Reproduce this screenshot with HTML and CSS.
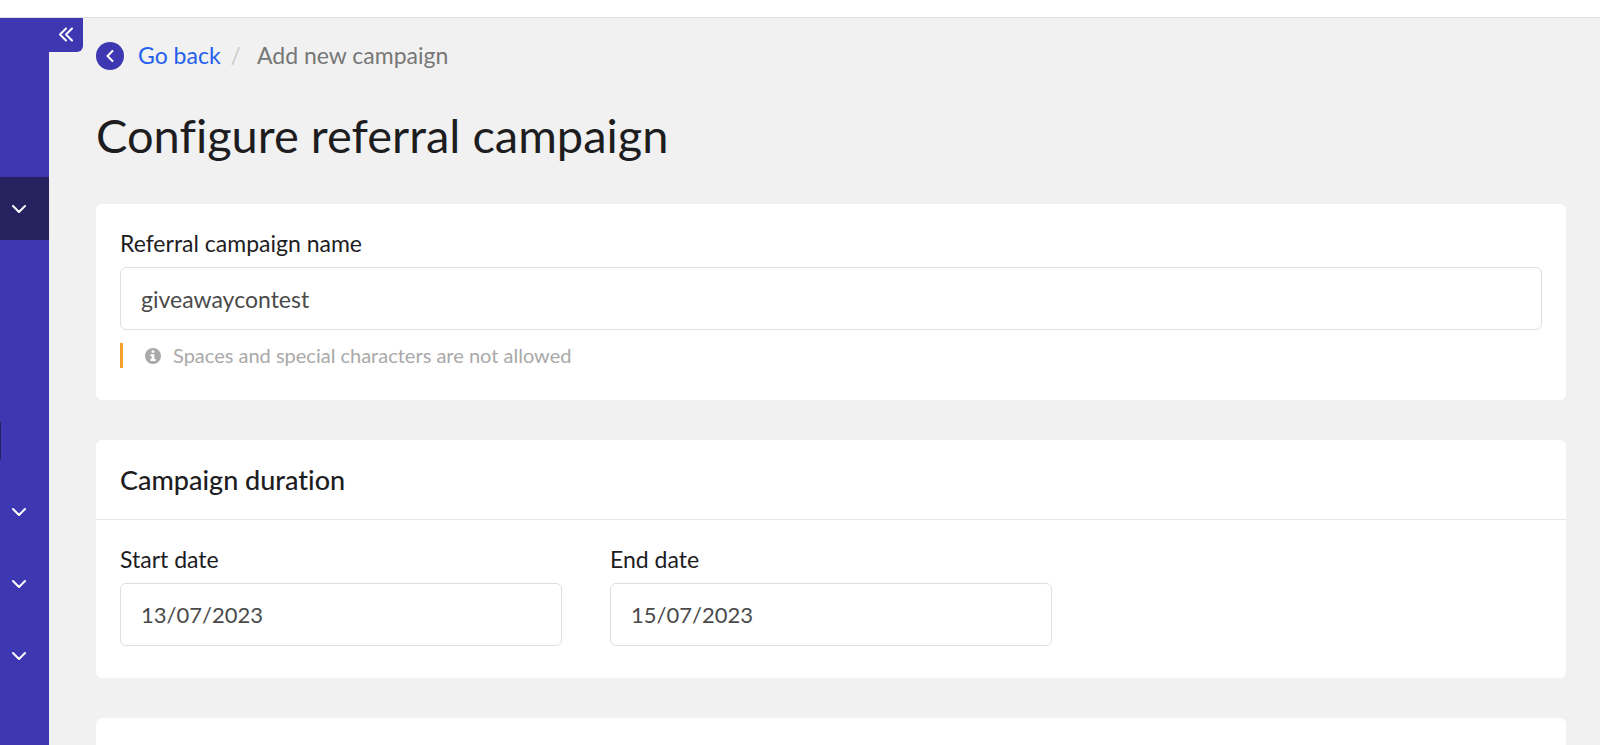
FILE: index.html
```html
<!DOCTYPE html>
<html lang="en">

<head>
    <meta charset="UTF-8">
    <meta name="viewport" content="width=device-width, initial-scale=1.0">
    <title>Configure referral campaign</title>
    <link rel="stylesheet" href="styles.css">
</head>

<body>

    <header class="topbar"></header>

    <div class="layout">
        <nav class="sidebar" aria-label="Main menu">
            <button class="collapse-btn" type="button" aria-label="Collapse menu">
                <svg width="16" height="16" viewBox="0 0 16 16"><path d="M8 1.5 2 7.5l6 6M14 1.5 8 7.5l6 6"/></svg>
            </button>
            <button class="nav-item active" type="button" aria-label="Open section">
                <svg width="14" height="8" viewBox="0 0 14 8"><path d="M1 1l6 6 6-6"/></svg>
            </button>
            <div class="nav-current"></div>
            <button class="nav-item" type="button" aria-label="Open section">
                <svg width="14" height="8" viewBox="0 0 14 8"><path d="M1 1l6 6 6-6"/></svg>
            </button>
            <button class="nav-item" type="button" aria-label="Open section">
                <svg width="14" height="8" viewBox="0 0 14 8"><path d="M1 1l6 6 6-6"/></svg>
            </button>
            <button class="nav-item" type="button" aria-label="Open section">
                <svg width="14" height="8" viewBox="0 0 14 8"><path d="M1 1l6 6 6-6"/></svg>
            </button>
        </nav>

        <main class="content">
            <div class="breadcrumb">
                <a class="back-link" href="#">
                    <span class="back-icon">
                        <svg width="8" height="12" viewBox="0 0 8 12"><path d="M6.5 1 1.5 6l5 5"/></svg>
                    </span>
                    Go back
                </a>
                <span class="separator">/</span>
                <span class="current">Add new campaign</span>
            </div>

            <h1 class="page-title">Configure referral campaign</h1>

            <section class="card">
                <div class="card-body">
                    <label for="campaignName">Referral campaign name</label>
                    <input type="text" id="campaignName" value="giveawaycontest">
                    <p class="hint">
                        <svg width="16" height="16" viewBox="0 0 16 16">
                            <circle cx="8" cy="8" r="8" fill="#a9a9a9"/>
                            <path d="M6.7 2.4h2.6v2.4H6.7zM5.4 6.2h3.9v4.6h1.3v2.1H5.4v-2.1h1.3V8.3H5.4z" fill="#fff"/>
                        </svg>
                        Spaces and special characters are not allowed
                    </p>
                </div>
            </section>

            <section class="card">
                <h2 class="card-header">Campaign duration</h2>
                <div class="card-body date-grid">
                    <div class="field">
                        <label for="startDate">Start date</label>
                        <input class="date-input" type="text" id="startDate" value="13/07/2023">
                    </div>
                    <div class="field">
                        <label for="endDate">End date</label>
                        <input class="date-input" type="text" id="endDate" value="15/07/2023">
                    </div>
                </div>
            </section>

            <section class="card card-next"></section>
        </main>
    </div>

</body>

</html>
```
FILE: styles.css
```css
:root {
    --primary-color: #3d38b2;
    --primary-dark: #25225f;
    --link-color: #2460ee;
    --background-color: #f1f1f1;
    --border-color: #dedede;
    --text-color: #1d1d1f;
    --input-color: #4a4a4a;
    --warning-color: #f5a02c;
}

* {
    margin: 0;
    padding: 0;
    box-sizing: border-box;
}

body {
    display: flex;
    flex-direction: column;
    min-height: 100vh;
    font-family: Lato, 'Noto Sans', sans-serif;
    font-size: 23px;
    font-variant-ligatures: none;
    line-height: 31px;
    background-color: var(--background-color);
    color: var(--text-color);
}

svg {
    flex: none;
    fill: none;
    stroke-linecap: round;
    stroke-linejoin: round;
}

.topbar {
    flex: none;
    height: 18px;
    background-color: #fff;
    border-bottom: 1px solid var(--border-color);
}

.layout {
    display: flex;
    flex: 1;
}

.sidebar {
    position: relative;
    flex: none;
    width: 49px;
    padding-top: 159px;
    background-color: var(--primary-color);
}

.sidebar svg {
    stroke: #fff;
    stroke-width: 2;
}

.collapse-btn {
    position: absolute;
    top: 0;
    left: 100%;
    display: flex;
    align-items: center;
    justify-content: center;
    width: 34px;
    height: 34px;
    border: none;
    border-radius: 0 0 6px 0;
    background-color: var(--primary-color);
    cursor: pointer;
}

.nav-item {
    display: flex;
    align-items: center;
    width: 100%;
    height: 72px;
    padding-left: 12px;
    border: none;
    background: none;
    cursor: pointer;
}

.nav-item.active {
    height: 63px;
    background-color: var(--primary-dark);
}

.nav-current {
    width: 1px;
    height: 38px;
    margin: 182px 0 16px;
    background-color: var(--primary-dark);
}

.content {
    display: flex;
    flex: 1;
    flex-direction: column;
    padding: 22px 34px 0 47px;
}

.breadcrumb {
    display: flex;
    align-items: center;
    color: #777;
}

.back-link {
    display: flex;
    align-items: center;
    gap: 14px;
    color: var(--link-color);
    text-decoration: none;
}

.back-icon {
    display: flex;
    align-items: center;
    justify-content: center;
    width: 28px;
    height: 28px;
    border-radius: 50%;
    background-color: var(--primary-color);
}

.back-icon svg {
    stroke: #fff;
    stroke-width: 2;
}

.separator {
    margin: 0 16px 0 10px;
    color: #ccc;
}

.page-title {
    margin: 32px 0 37px;
    font-size: 47px;
    font-weight: 400;
    line-height: 64px;
}

.card {
    margin-bottom: 40px;
    border-radius: 6px;
    background-color: #fff;
}

.card-header {
    padding: 24px;
    border-bottom: 1px solid #e8e8e8;
    font-size: 27px;
    font-weight: 500;
}

.card-body {
    padding: 24px 24px 32px;
}

.card-next {
    flex: 1;
    margin-bottom: 0;
    border-radius: 6px 6px 0 0;
}

.date-grid {
    display: grid;
    grid-template-columns: repeat(3, 1fr);
    gap: 48px;
}

label {
    display: block;
    margin-bottom: 8px;
}

input {
    display: block;
    width: 100%;
    height: 63px;
    padding: 0 20px;
    border: 1px solid var(--border-color);
    border-radius: 6px;
    background-color: #fff;
    font: inherit;
    color: var(--input-color);
}

.date-input {
    font-size: 22px;
}

.hint {
    display: flex;
    align-items: center;
    gap: 12px;
    margin-top: 13px;
    padding-left: 22px;
    border-left: 3px solid var(--warning-color);
    font-size: 20px;
    line-height: 25px;
    color: #a9a9a9;
}
```
